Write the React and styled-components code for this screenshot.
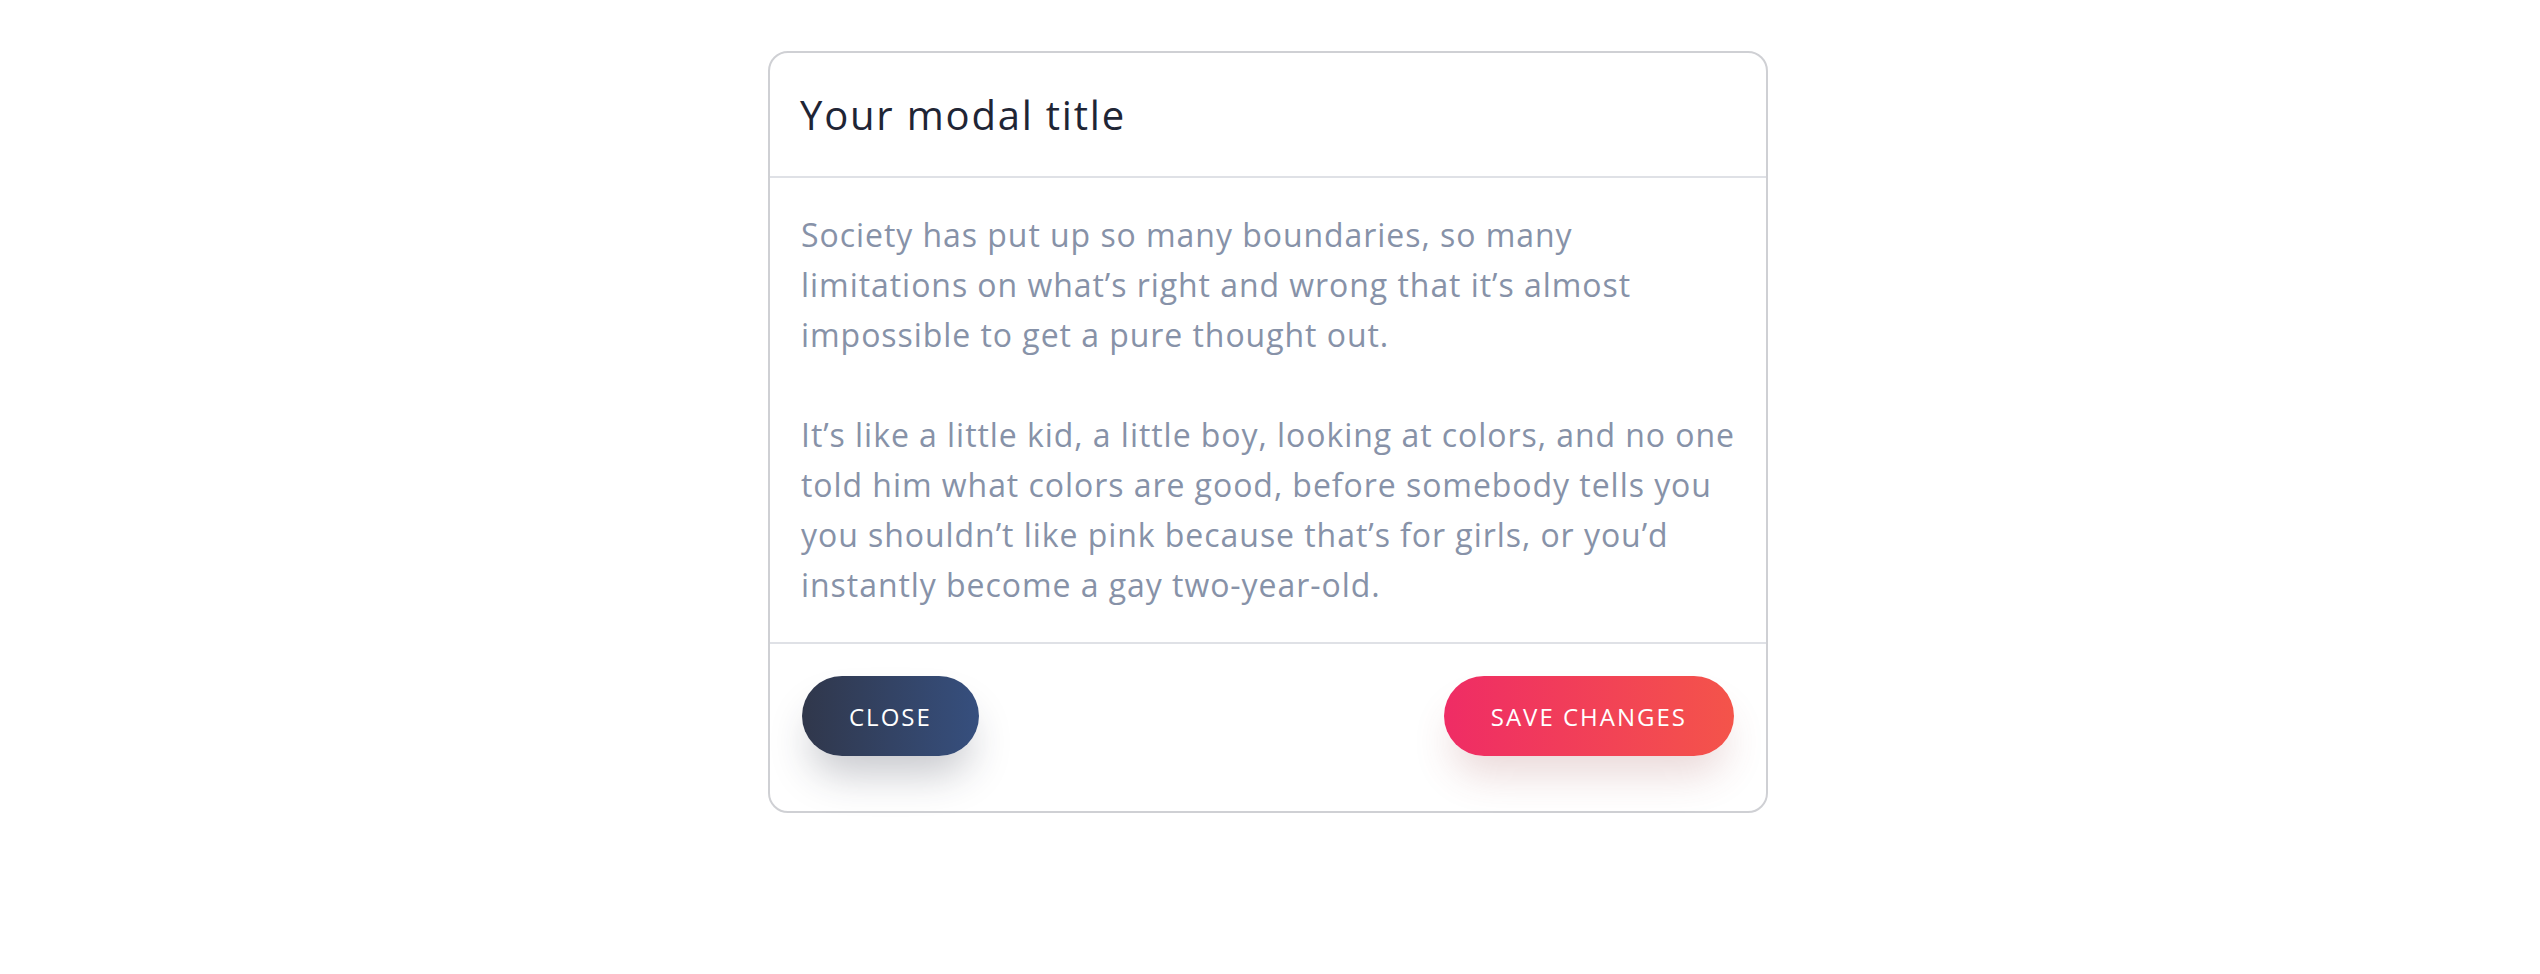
import React from "react";
import styled, { createGlobalStyle } from "styled-components";

const GlobalStyle = createGlobalStyle`
  html, body { margin: 0; padding: 0; background: #ffffff; }
  body { font-family: "Open Sans", "Liberation Sans", sans-serif; }
  * { box-sizing: border-box; }
`;

const Page = styled.div`
  display: flex;
  justify-content: center;
  padding: 51px 4px 0 0;
  min-height: 974px;
`;

const Modal = styled.div`
  width: 1000px;
  align-self: flex-start;
  border: 2px solid #cfd0d4;
  border-radius: 20px;
  background: #fff;
  display: flex;
  flex-direction: column;
`;

const Header = styled.div`
  height: 125px;
  display: flex;
  align-items: center;
  padding: 0 30px;
  border-bottom: 2px solid #dfe1e6;
`;

const Title = styled.h5`
  margin: 0;
  font-size: 40px;
  font-weight: 400;
  color: #1f2535;
  letter-spacing: 1.8px;
`;

const Body = styled.div`
  padding: 32px 31px 32px;
  border-bottom: 2px solid #dfe1e6;
`;

const Paragraph = styled.p`
  margin: 0 0 ${(p) => (p.$last ? 0 : 50)}px;
  font-size: 32px;
  line-height: 50px;
  color: #8792a8;
  white-space: pre;
  letter-spacing: 0.95px;
`;

const Footer = styled.div`
  display: flex;
  justify-content: space-between;
  align-items: flex-start;
  padding: 32px 32px 55px;
`;

const Button = styled.button`
  height: 80px;
  padding: 0 ${(p) => p.$padX}px;
  border: none;
  border-radius: 40px;
  font-family: "Open Sans", "Liberation Sans", sans-serif;
  font-size: 24px;
  font-weight: 500;
  letter-spacing: 2px;
  text-transform: uppercase;
  color: #ffffff;
  background: ${(p) => p.$bg};
  box-shadow: ${(p) => p.$shadow};
  cursor: pointer;
`;

export default function App() {
  return (
    <>
      <GlobalStyle />
      <Page>
        <Modal>
          <Header>
            <Title>Your modal title</Title>
          </Header>
          <Body>
            <Paragraph>
              {"Society has put up so many boundaries, so many\nlimitations on what’s right and wrong that it’s almost\nimpossible to get a pure thought out."}
            </Paragraph>
            <Paragraph $last>
              {"It’s like a little kid, a little boy, looking at colors, and no one\ntold him what colors are good, before somebody tells you\nyou shouldn’t like pink because that’s for girls, or you’d\ninstantly become a gay two-year-old."}
            </Paragraph>
          </Body>
          <Footer>
            <Button
              $padX={47}
              $bg="linear-gradient(90deg, #30374b 0%, #364f7e 100%)"
              $shadow="0 26px 40px -8px rgba(40, 44, 60, 0.26)"
            >
              Close
            </Button>
            <Button
              $padX={47}
              $bg="linear-gradient(90deg, #ef2c65 0%, #f4544a 100%)"
              $shadow="0 26px 40px -8px rgba(150, 60, 60, 0.2)"
            >
              Save changes
            </Button>
          </Footer>
        </Modal>
      </Page>
    </>
  );
}
